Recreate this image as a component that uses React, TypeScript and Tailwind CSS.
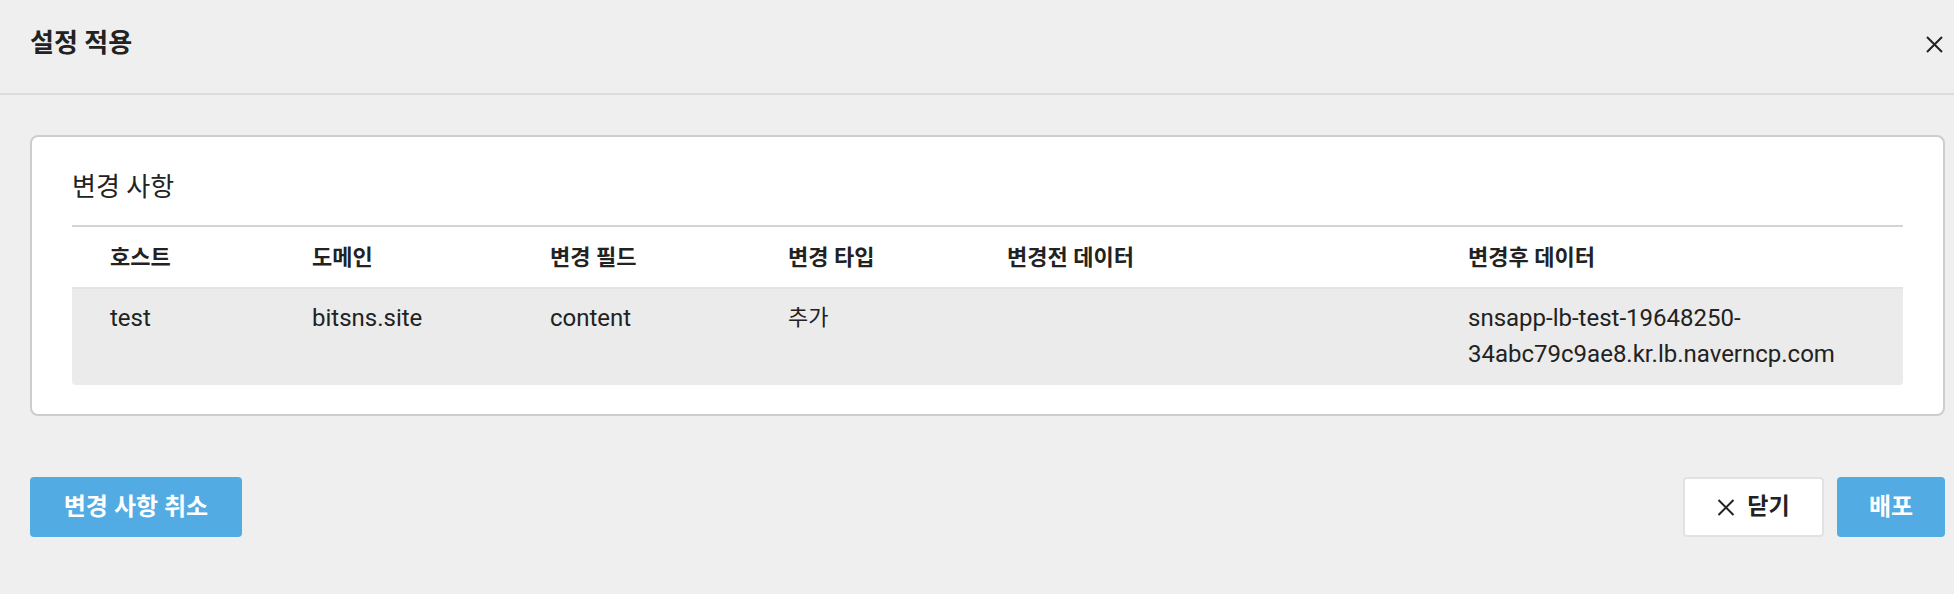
import React from 'react';

interface Change {
  host: string;
  domain: string;
  field: string;
  type: string;
  before: string;
  after: string;
}

const changes: Change[] = [
  {
    host: 'test',
    domain: 'bitsns.site',
    field: 'content',
    type: '추가',
    before: '',
    after: 'snsapp-lb-test-19648250-34abc79c9ae8.kr.lb.naverncp.com',
  },
];

const columns = ['호스트', '도메인', '변경 필드', '변경 타입', '변경전 데이터', '변경후 데이터'];
const widths = ['w-[202px]', 'w-[238px]', 'w-[238px]', 'w-[219px]', 'w-[461px]', 'w-[473px]'];

const CloseIcon: React.FC<{ className?: string }> = ({ className }) => (
  <svg viewBox="0 0 17 17" className={className} fill="none" stroke="currentColor" strokeWidth="2">
    <path d="M1 1L16 16M16 1L1 16" />
  </svg>
);

const App: React.FC = () => {
  return (
    <div className="min-h-[594px] w-full bg-[#efefef] font-['Roboto','Noto_Sans_CJK_KR',sans-serif] text-[#222]">
      <header className="flex h-[95px] items-start justify-between border-b-2 border-[#dcdcdc] pl-[30px] pr-[11px]">
        <h2 className="pt-[25px] text-[26px] leading-[36px] font-bold">설정 적용</h2>
        <button className="mt-[36px] text-[#222]">
          <CloseIcon className="h-[17px] w-[17px]" />
        </button>
      </header>

      <div className="pl-[30px] pr-[9px] pt-[40px]">
        <section className="rounded-lg border-2 border-[#cdcdcd] bg-white px-[40px] pt-[32px] pb-[29px]">
          <h3 className="text-[26px] leading-[36px]">변경 사항</h3>
          <table className="mt-[20px] w-full table-fixed border-separate border-spacing-0">
            <colgroup>
              {widths.map((w, i) => (
                <col key={i} className={w} />
              ))}
            </colgroup>
            <thead>
              <tr>
                {columns.map((c) => (
                  <th
                    key={c}
                    className="h-[64px] border-t-2 border-b-2 border-t-[#d4d4d4] border-b-[#e4e4e4] pl-[38px] text-left text-[22px] font-bold"
                  >
                    {c}
                  </th>
                ))}
              </tr>
            </thead>
            <tbody>
              {changes.map((row, i) => (
                <tr key={i} className="bg-[#eaebea] align-top text-[24px] leading-[36px]">
                  <td className="rounded-bl pl-[38px] pt-[11px] pb-[13px]">{row.host}</td>
                  <td className="pl-[38px] pt-[11px] pb-[13px]">{row.domain}</td>
                  <td className="pl-[38px] pt-[11px] pb-[13px]">{row.field}</td>
                  <td className="pl-[38px] pt-[11px] pb-[13px] text-[22px]">{row.type}</td>
                  <td className="pl-[38px] pt-[11px] pb-[13px]">{row.before}</td>
                  <td className="rounded-br pl-[38px] pr-[20px] pt-[11px] pb-[13px] break-words">{row.after}</td>
                </tr>
              ))}
            </tbody>
          </table>
        </section>

        <div className="mt-[61px] flex items-center justify-between">
          <button className="h-[60px] w-[212px] rounded bg-[#52abe3] text-[24px] font-bold text-white">
            변경 사항 취소
          </button>
          <div className="flex gap-[13px]">
            <button className="flex h-[60px] w-[141px] items-center justify-center gap-[12px] rounded border-2 border-[#e2e2e2] bg-white text-[23px] font-bold">
              <CloseIcon className="h-[17px] w-[18px]" />
              <span>닫기</span>
            </button>
            <button className="h-[60px] w-[108px] rounded bg-[#52abe3] text-[24px] font-bold text-white">
              배포
            </button>
          </div>
        </div>
      </div>
    </div>
  );
};

export default App;
